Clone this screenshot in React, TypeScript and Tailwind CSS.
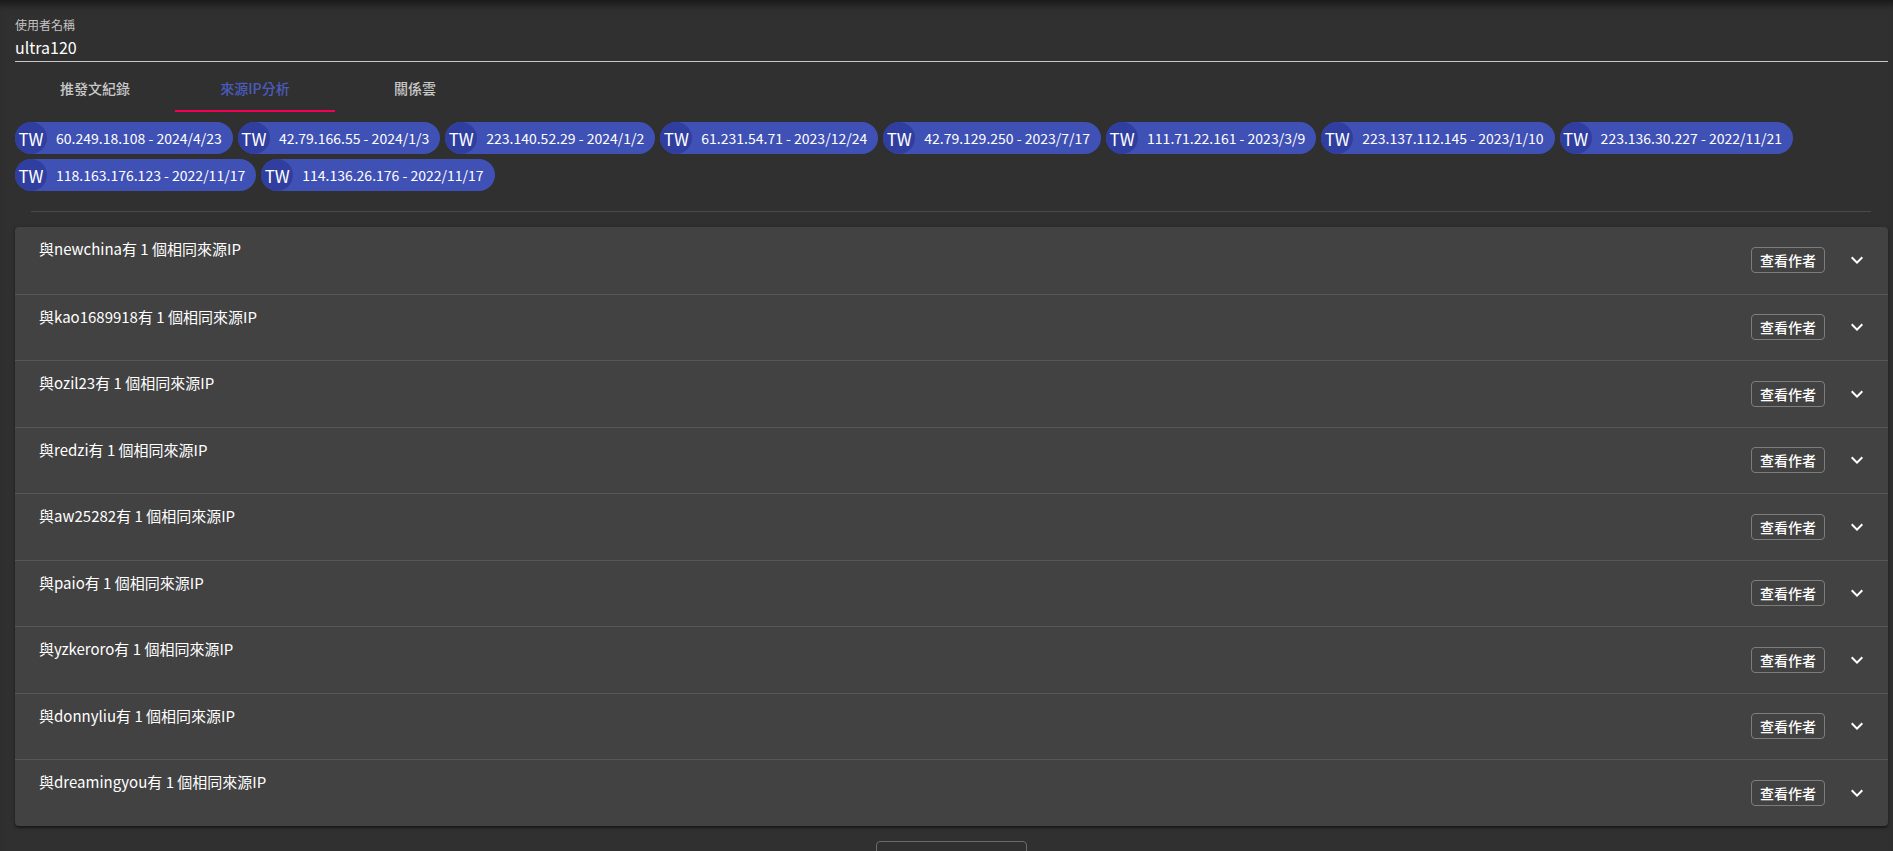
import React from "react";

const chips = [
  "60.249.18.108 - 2024/4/23",
  "42.79.166.55 - 2024/1/3",
  "223.140.52.29 - 2024/1/2",
  "61.231.54.71 - 2023/12/24",
  "42.79.129.250 - 2023/7/17",
  "111.71.22.161 - 2023/3/9",
  "223.137.112.145 - 2023/1/10",
  "223.136.30.227 - 2022/11/21",
  "118.163.176.123 - 2022/11/17",
  "114.136.26.176 - 2022/11/17",
];

const users = [
  "newchina",
  "kao1689918",
  "ozil23",
  "redzi",
  "aw25282",
  "paio",
  "yzkeroro",
  "donnyliu",
  "dreamingyou",
];

function ExpandMore() {
  return (
    <svg viewBox="0 0 24 24" width="24" height="24" fill="#ffffff">
      <path d="M16.59 8.59L12 13.17 7.41 8.59 6 10l6 6 6-6z" />
    </svg>
  );
}

export default function App() {
  return (
    <div
      className="min-h-[851px] bg-[#303030] pl-[15px] pr-[5px] pt-[17px] shadow-[inset_0_10px_8px_-6px_rgba(0,0,0,0.55)]"
      style={{ fontFamily: '"Noto Sans CJK TC", "Noto Sans", sans-serif' }}
    >
      <div className="text-[12px] leading-[16px] text-[#c4c4c4]">使用者名稱</div>
      <div className="mt-[3px] h-[26px] border-b border-[#c8c8c8] text-[16px] leading-[22px] text-white">
        ultra120
      </div>

      <div className="mt-[2px] flex h-[48px]">
        <div className="flex w-[160px] items-center justify-center text-[14px] font-medium text-[#c8c8c8]">
          推發文紀錄
        </div>
        <div className="relative flex w-[160px] items-center justify-center text-[14px] font-medium text-[#4a5bbd]">
          來源IP分析
          <div className="absolute bottom-0 left-0 h-[2px] w-full bg-[#f50057]" />
        </div>
        <div className="flex w-[160px] items-center justify-center text-[14px] font-medium text-[#c8c8c8]">
          關係雲
        </div>
      </div>

      <div className="mt-[10px] flex flex-wrap gap-[5px]">
        {chips.map((c) => (
          <div
            key={c}
            className="flex h-[32px] items-center rounded-full bg-[#3f51b5] text-white"
          >
            <div className="flex h-[32px] w-[32px] items-center justify-center rounded-full bg-[#303f9f] text-[17px] leading-none">
              TW
            </div>
            <span className="pl-[9px] pr-[11px] text-[14px] leading-none">{c}</span>
          </div>
        ))}
      </div>

      <div className="ml-[16px] mr-[17px] mt-[20px] h-px bg-[#4a4a4a]" />

      <div className="mt-[15px] overflow-hidden rounded-[4px] bg-[#424242] shadow-[0_2px_2px_rgba(0,0,0,0.35),0_1px_4px_rgba(0,0,0,0.25)]">
        {users.map((u, i) => (
          <div
            key={u}
            className={`flex h-[66.5px] items-center pl-[24px] pr-[19px] ${
              i > 0 ? "border-t border-[#575757]" : ""
            }`}
          >
            <div className="flex-1 self-start pt-[10px] text-[15px] leading-[24px] text-white">
              與{u}有 1 個相同來源IP
            </div>
            <div className="flex h-[26px] items-center rounded-[4px] border border-[#7d7d7d] px-[8px] text-[14px] font-medium leading-none text-white">
              查看作者
            </div>
            <div className="ml-[20px] flex h-[24px] w-[24px] items-center justify-center">
              <ExpandMore />
            </div>
          </div>
        ))}
      </div>

      <div className="mt-[15px] flex justify-center pb-[20px]">
        <div className="h-[36px] w-[151px] rounded-[4px] border border-[#6a6a6a]" />
      </div>
    </div>
  );
}
